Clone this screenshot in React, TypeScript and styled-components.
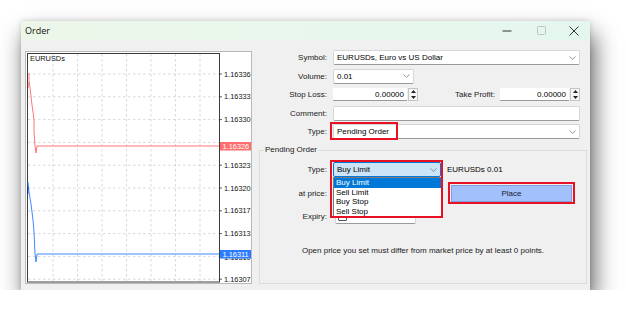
import React from 'react';
import styled, { createGlobalStyle } from 'styled-components';

const GlobalStyle = createGlobalStyle`
  html, body {
    margin: 0;
    padding: 0;
    background: #ffffff;
  }
  body {
    font-family: 'Liberation Sans', Arial, sans-serif;
    font-size: 8px;
    color: #000;
  }
`;

const Page = styled.div`
  padding: 21px 0 0 21px;
`;

const Window = styled.div`
  width: 569px;
  height: 269px;
  background: #f0f0f0;
  box-shadow: 4px 13px 22px rgba(0, 0, 0, 0.62), 0 0 5px rgba(0, 0, 0, 0.15);
  display: flex;
  flex-direction: column;
`;

const TitleBar = styled.div`
  height: 19px;
  flex: none;
  background: linear-gradient(90deg, #ecf6e9, #e4f7ef);
  display: flex;
  align-items: center;
  padding-left: 4px;
`;

const Title = styled.span`
  flex: 1;
  font-family: 'Open Sans', 'Liberation Sans', sans-serif;
  font-size: 9px;
  color: #111;
`;

const WinButton = styled.div<{ $w: number }>`
  width: ${(p) => p.$w}px;
  height: 19px;
  display: flex;
  align-items: center;
  justify-content: center;
`;

const Body = styled.div`
  flex: 1;
  display: flex;
  gap: 7px;
  padding: 11px 3px 6px 4px;
`;

const ChartPanel = styled.div`
  width: 225px;
  height: 231px;
  border: 1px solid #b9b9b9;
  background: #ffffff;
`;

const RightPanel = styled.div`
  flex: 1;
  display: flex;
  flex-direction: column;
`;

const Form = styled.div`
  display: grid;
  grid-template-columns: 68px 1fr;
  grid-auto-rows: 15px;
  column-gap: 6px;
  row-gap: 3.6px;
  padding-right: 7px;
  margin-top: -1px;
`;

const Label = styled.div`
  text-align: right;
  align-self: center;
  white-space: nowrap;
  color: #1a1a1a;
`;

const Field = styled.div<{ $w?: number; $active?: boolean }>`
  position: relative;
  box-sizing: border-box;
  width: ${(p) => (p.$w ? `${p.$w}px` : '100%')};
  height: 15px;
  background: ${(p) => (p.$active ? '#cce4f7' : '#ffffff')};
  border: 1px solid ${(p) => (p.$active ? '#0078d7' : '#d6d6d6')};
  border-bottom-color: ${(p) => (p.$active ? '#0078d7' : '#9a9a9a')};
  border-radius: 2px;
  display: flex;
  align-items: center;
  padding: 0 3px;
  white-space: nowrap;
`;

const FieldText = styled.span<{ $right?: boolean }>`
  flex: 1;
  text-align: ${(p) => (p.$right ? 'right' : 'left')};
  padding-right: ${(p) => (p.$right ? '3px' : '0')};
`;

const SpinRow = styled.div`
  display: flex;
  align-items: center;
`;

const SpinWrap = styled.div<{ $w: number }>`
  width: ${(p) => p.$w}px;
  height: 13px;
  display: flex;
`;

const SpinInput = styled.div`
  flex: 1;
  background: #fff;
  border-bottom: 1px solid #9a9a9a;
  display: flex;
  align-items: center;
  justify-content: flex-end;
  padding-right: 3px;
`;

const Spinner = styled.div`
  width: 8px;
  margin-left: 1px;
  display: flex;
  flex-direction: column;
  border: 1px solid #c4c4c4;
  background: #f7f7f7;
`;

const SpinHalf = styled.div`
  flex: 1;
  display: flex;
  align-items: center;
  justify-content: center;
`;

const TpLabel = styled.div`
  flex: 1;
  text-align: right;
  padding-right: 5px;
  color: #1a1a1a;
`;

const RedFrame = styled.div<{ $w: number; $h: number }>`
  position: absolute;
  left: -4px;
  top: -3px;
  width: ${(p) => p.$w}px;
  height: ${(p) => p.$h}px;
  box-sizing: border-box;
  border: 2px solid #e81123;
  pointer-events: none;
  z-index: 3;
`;

const Group = styled.fieldset`
  margin: 6px 0 0 0;
  padding: 7px 0 0 0;
  border: 1px solid #dcdcdc;
  min-width: 0;
  flex: 1;
`;

const Legend = styled.legend`
  padding: 0 1px;
  margin-left: 4px;
  line-height: 10px;
  color: #1a1a1a;
`;

const GroupGrid = styled.div`
  display: grid;
  grid-template-columns: 67px 108px 1fr;
  grid-auto-rows: 15px;
  column-gap: 6px;
  row-gap: 8.4px;
  align-items: center;
`;

const DropList = styled.div`
  position: absolute;
  left: -1px;
  top: 14px;
  width: 108px;
  background: #fff;
  border: 1px solid #7a7a7a;
  z-index: 2;
`;

const DropItem = styled.div<{ $sel?: boolean }>`
  height: 9.5px;
  line-height: 9.5px;
  padding-left: 2px;
  background: ${(p) => (p.$sel ? '#0078d7' : '#fff')};
  color: ${(p) => (p.$sel ? '#fff' : '#000')};
`;

const PlaceFrame = styled.div`
  width: 127px;
  box-sizing: border-box;
  border: 2px solid #e81123;
  padding: 1px 1px 0 1px;
  margin-left: 1px;
`;

const PlaceButton = styled.div`
  height: 17px;
  box-sizing: border-box;
  background: #a2c0fc;
  border: 1px solid #7f9fe0;
  display: flex;
  align-items: center;
  justify-content: center;
  color: #1a1a2a;
`;

const DateBox = styled.div`
  width: 81px;
  height: 15px;
  margin-left: 2px;
  box-sizing: border-box;
  border: 1px solid #d6d6d6;
  border-bottom-color: #9a9a9a;
  border-radius: 2px;
  background: #fff;
  display: flex;
  align-items: flex-end;
  gap: 3px;
  padding: 0 2px 2px;
  color: #a0a0a0;
`;

const Check = styled.div`
  width: 7px;
  height: 7px;
  flex: none;
  border: 1px solid #555;
  border-radius: 1px;
  background: #fff;
`;

const Note = styled.div`
  text-align: center;
  margin-top: 22px;
  color: #1a1a1a;
`;

const Chevron = () => (
  <svg width="7" height="4" viewBox="0 0 7 4">
    <path d="M0.5 0.5 L3.5 3.3 L6.5 0.5" fill="none" stroke="#7a7a7a" strokeWidth="0.8" />
  </svg>
);

const Spin = ({ value, w }: { value: string; w: number }) => (
  <SpinWrap $w={w}>
    <SpinInput>{value}</SpinInput>
    <Spinner>
      <SpinHalf>
        <svg width="5" height="3" viewBox="0 0 5 3">
          <path d="M0 3 L2.5 0 L5 3 Z" fill="#222" />
        </svg>
      </SpinHalf>
      <SpinHalf>
        <svg width="5" height="3" viewBox="0 0 5 3">
          <path d="M0 0 L2.5 3 L5 0 Z" fill="#222" />
        </svg>
      </SpinHalf>
    </Spinner>
  </SpinWrap>
);

// axis labels; the 4th and 9th sit under the bid/ask tags
const prices = [
  '1.16336', '1.16333', '1.16330', '1.16326', '1.16323',
  '1.16320', '1.16317', '1.16313', '1.16310', '1.16307',
];

const Chart = () => {
  const rows = prices.map((_, i) => 22 + i * 22.8);
  const cols = [27, 51.5, 76, 100.5, 125, 149.5, 174];
  return (
    <svg width="225" height="231" viewBox="0 0 225 231" fontFamily="'Liberation Sans', Arial, sans-serif">
      {cols.map((x) => (
        <line key={`v${x}`} x1={x} y1={2} x2={x} y2={229} stroke="#cfcfcf" strokeWidth="0.8" strokeDasharray="2.5 2.5" />
      ))}
      {rows.map((y) => (
        <line key={`h${y}`} x1={2} y1={y} x2={193} y2={y} stroke="#cfcfcf" strokeWidth="0.8" strokeDasharray="2.5 2.5" />
      ))}
      {rows.map((y, i) =>
        i === 3 ? null : (
          <g key={`t${i}`}>
            <line x1={193} y1={y} x2={196} y2={y} stroke="#333" strokeWidth="0.8" />
            <text x={198} y={i === 8 ? y + 3.6 : y + 2.6} fontSize="7.4" fill="#111">
              {prices[i]}
            </text>
          </g>
        )
      )}
      <rect x="1.5" y="1.5" width="192" height="228.5" fill="none" stroke="#3c3c3c" strokeWidth="1" />
      <text x="4" y="9" fontSize="7.4" fill="#111">EURUSDs</text>

      <polyline
        points="3,21 3,28 4,36 5,44 6,53 7,60 8,68 8,80 9,94 10,101 11,94 193,94"
        fill="none"
        stroke="#ff7777"
        strokeWidth="1"
      />
      <line x1="1.8" y1="30" x2="1.8" y2="36" stroke="#8a1d1d" strokeWidth="1" />
      <rect x="194" y="90" width="31" height="8.5" fill="#ff6d6d" />
      <text x="196.5" y="96.8" fontSize="7.4" fill="#fff">1.16326</text>

      <polyline
        points="2,130 3,140 4,146 5,152 6,160 7,168 8,180 9,202 10,210 11,202 193,202"
        fill="none"
        stroke="#3d8bff"
        strokeWidth="1"
      />
      <line x1="1.8" y1="135" x2="1.8" y2="142" stroke="#0d2f8a" strokeWidth="1" />
      <rect x="194" y="198" width="31" height="8.5" fill="#2b7cff" />
      <text x="196.5" y="204.8" fontSize="7.4" fill="#fff">1.16311</text>
    </svg>
  );
};

const App = () => (
  <>
    <GlobalStyle />
    <Page>
      <Window>
        <TitleBar>
          <Title>Order</Title>
          <WinButton $w={34}>
            <svg width="10" height="2" viewBox="0 0 10 2">
              <line x1="0.5" y1="1" x2="9.5" y2="1" stroke="#333" strokeWidth="1" />
            </svg>
          </WinButton>
          <WinButton $w={34}>
            <svg width="9" height="9" viewBox="0 0 9 9">
              <rect x="0.5" y="0.5" width="8" height="8" rx="1" fill="none" stroke="#c3c3c3" strokeWidth="1" />
            </svg>
          </WinButton>
          <WinButton $w={32}>
            <svg width="10" height="10" viewBox="0 0 10 10">
              <path d="M0.5 0.5 L9.5 9.5 M9.5 0.5 L0.5 9.5" stroke="#333" strokeWidth="1" />
            </svg>
          </WinButton>
        </TitleBar>
        <Body>
          <ChartPanel>
            <Chart />
          </ChartPanel>
          <RightPanel>
            <Form>
              <Label>Symbol:</Label>
              <Field>
                <FieldText>EURUSDs, Euro vs US Dollar</FieldText>
                <Chevron />
              </Field>
              <Label>Volume:</Label>
              <Field $w={81}>
                <FieldText>0.01</FieldText>
                <Chevron />
              </Field>
              <Label>Stop Loss:</Label>
              <SpinRow>
                <Spin value="0.00000" w={85} />
                <TpLabel>Take Profit:</TpLabel>
                <Spin value="0.00000" w={80} />
              </SpinRow>
              <Label>Comment:</Label>
              <Field />
              <Label>Type:</Label>
              <Field>
                <FieldText>Pending Order</FieldText>
                <Chevron />
                <RedFrame $w={68} $h={18} />
              </Field>
            </Form>
            <Group>
              <Legend>Pending Order</Legend>
              <GroupGrid>
                <Label>Type:</Label>
                <Field $active>
                  <FieldText>Buy Limit</FieldText>
                  <Chevron />
                  <DropList>
                    <DropItem $sel>Buy Limit</DropItem>
                    <DropItem>Sell Limit</DropItem>
                    <DropItem>Buy Stop</DropItem>
                    <DropItem>Sell Stop</DropItem>
                  </DropList>
                  <RedFrame $w={113} $h={58} />
                </Field>
                <div>EURUSDs 0.01</div>

                <Label>at price:</Label>
                <Field>
                  <FieldText $right>0.00000</FieldText>
                </Field>
                <PlaceFrame>
                  <PlaceButton>Place</PlaceButton>
                </PlaceFrame>

                <Label>Expiry:</Label>
                <DateBox>
                  <Check />
                </DateBox>
                <div />
              </GroupGrid>
              <Note>Open price you set must differ from market price by at least 0 points.</Note>
            </Group>
          </RightPanel>
        </Body>
      </Window>
    </Page>
  </>
);

export default App;
